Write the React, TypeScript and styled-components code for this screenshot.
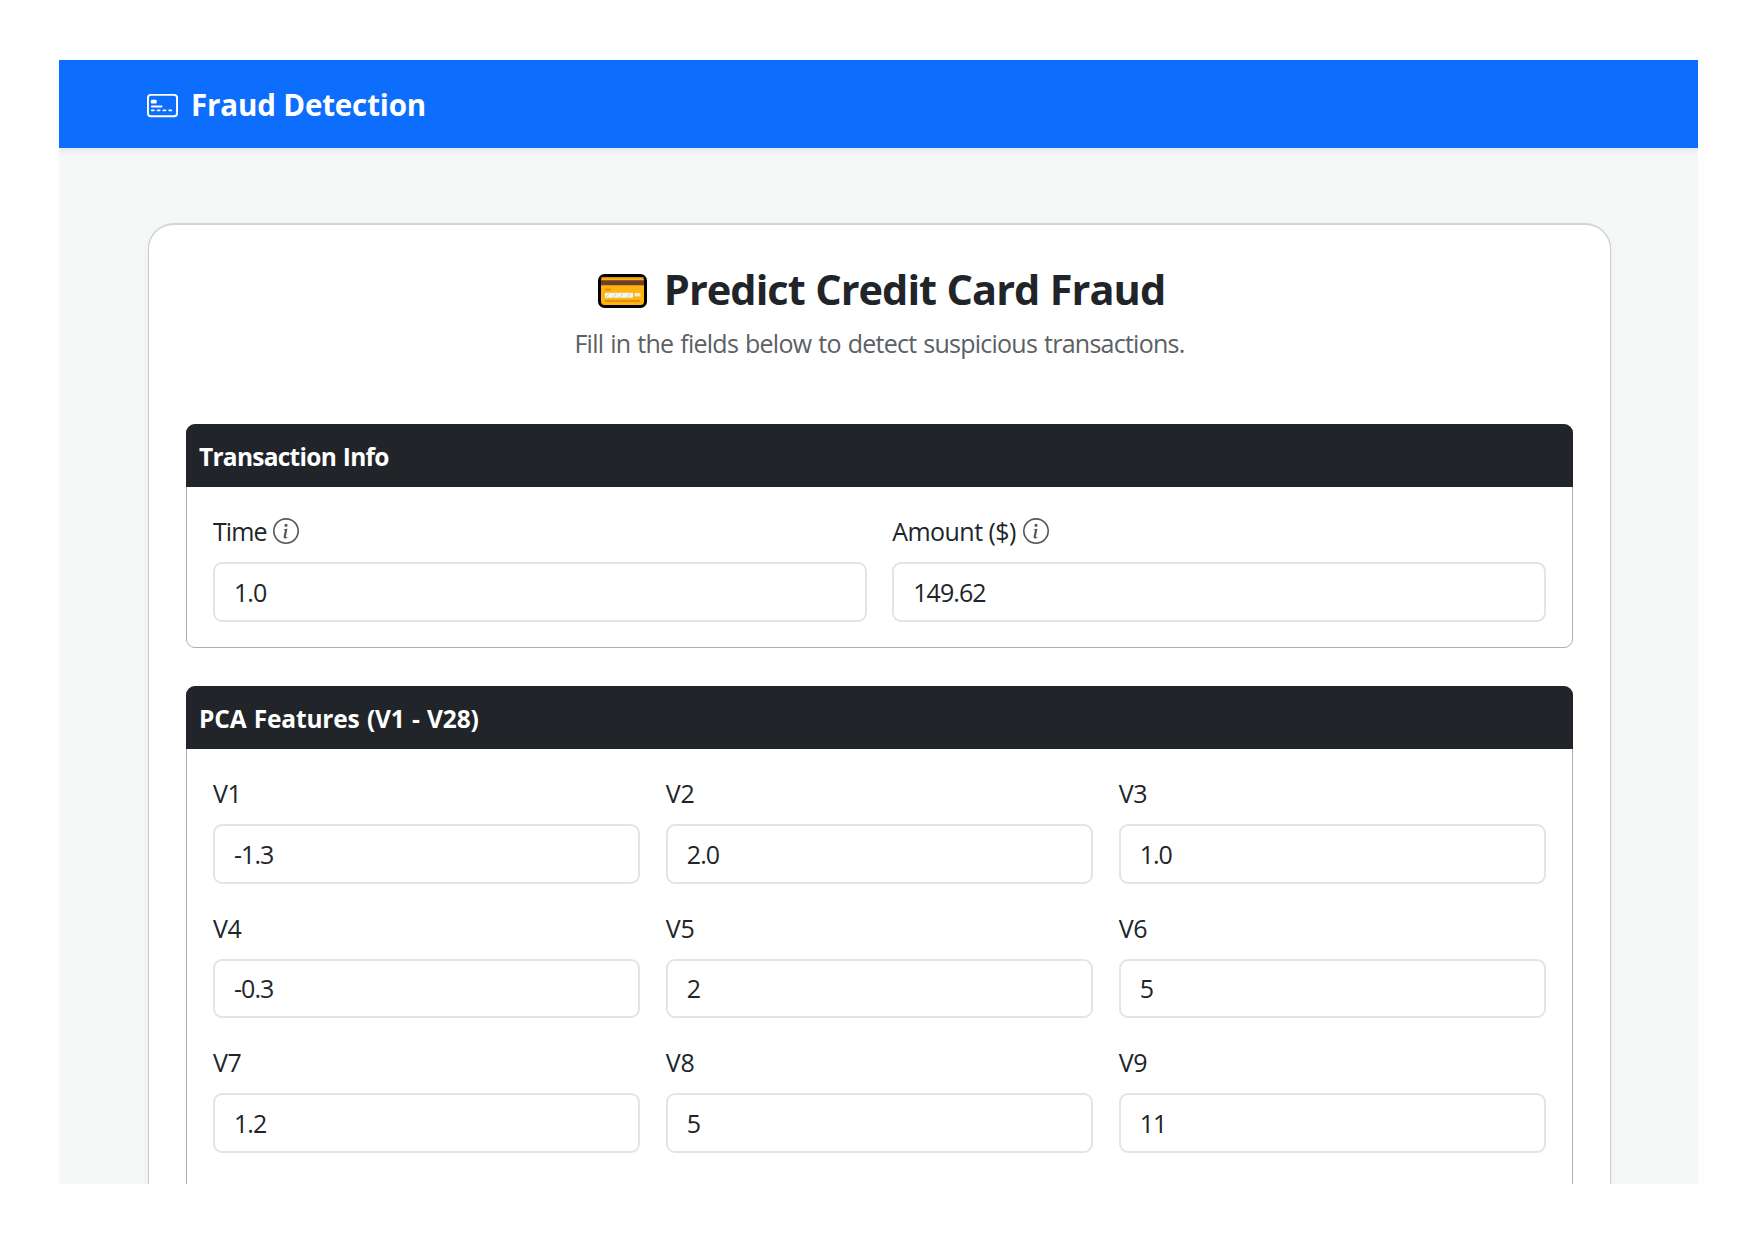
import React from "react";
import styled, { createGlobalStyle } from "styled-components";
import { BsCreditCard2Front, BsInfoCircle } from "react-icons/bs";

const GlobalStyle = createGlobalStyle`
  *, *::before, *::after { box-sizing: border-box; }
  body {
    margin: 0;
    background: #fefefe;
    color: #212529;
    font-family: "Segoe UI", "Open Sans", "Noto Sans", sans-serif;
    font-size: 25px;
    line-height: 36px;
  }
`;

const Page = styled.div`
  height: 1241px;
  padding: 60px 57px 57px 59px;
  overflow: hidden;
`;

const Window = styled.div`
  height: 1124px;
  overflow: hidden;
  background: #f6f8f8;
`;

const Navbar = styled.header`
  display: flex;
  align-items: center;
  height: 87.5px;
  padding: 3px 0 0 88px;
  color: #fff;
  background: #0d6efd;
  box-shadow: 0 3px 7px rgba(0, 40, 110, 0.09);
`;

const Brand = styled.div`
  display: flex;
  align-items: center;
  gap: 13px;
  font-size: 29.5px;
  font-weight: 700;
  letter-spacing: -0.15px;

  svg {
    width: 31px;
    height: 31px;
  }
`;

const Card = styled.main`
  width: 1463px;
  height: 1200px;
  margin: 75.5px 0 0 89px;
  padding: 43px 37px;
  border: 1px solid #c8ccd0;
  border-top: 2px solid #d2d5d7;
  border-radius: 26px;
  background: #fff;
  box-shadow: 0 3px 9px rgba(20, 90, 190, 0.07);
`;

const Title = styled.h1`
  display: flex;
  align-items: center;
  justify-content: center;
  gap: 17px;
  height: 42px;
  margin: 0;
  padding-left: 4px;
  font-size: 41.5px;
  line-height: 42px;
  font-weight: 700;
  letter-spacing: -0.96px;
  word-spacing: 0.6px;

  svg {
    margin-top: 3px;
  }
`;

const Subtitle = styled.p`
  margin: 15px 0 63px;
  height: 36px;
  text-align: center;
  letter-spacing: -0.75px;
  word-spacing: 1.2px;
  color: #5b6065;
`;

const Section = styled.section<{ $tall?: boolean }>`
  margin-bottom: 38px;
  min-height: ${(p) => (p.$tall ? "700px" : "0")};
  border: 1px solid #a9afb4;
  border-radius: 9px;
  background: #fff;
`;

const SectionHeader = styled.h2<{ $tracking: number }>`
  height: 62.5px;
  margin: -1px -1px 0;
  padding: 14.5px 13px 0;
  border-radius: 9px 9px 0 0;
  color: #fff;
  background: #212529;
  font-size: 24.5px;
  line-height: 36px;
  font-weight: 700;
  letter-spacing: ${(p) => p.$tracking}px;
  word-spacing: 1.2px;
`;

const Fields = styled.div<{ $columns: number }>`
  display: grid;
  grid-template-columns: repeat(${(p) => p.$columns}, 1fr);
  gap: 25px 25.5px;
  padding: 26.5px 26px 25.5px;
`;

const Field = styled.label`
  display: flex;
  flex-direction: column;
  gap: 13px;

  & + & {
    min-width: 0;
  }
`;

const LabelText = styled.span<{ $tracking: number }>`
  display: flex;
  align-items: center;
  gap: 7px;
  height: 36px;
  letter-spacing: ${(p) => p.$tracking}px;

  svg {
    width: 26px;
    height: 26px;
    color: #55595d;
  }
`;

const Input = styled.input`
  width: 100%;
  height: 59.5px;
  padding: 0 19px;
  border: 2px solid #e1e4e8;
  border-radius: 9px;
  outline: none;
  color: #212529;
  background: #fff;
  font: inherit;
  letter-spacing: -0.95px;
`;

const PcaFields = styled(Fields)`
  row-gap: 26px;
`;

const CardEmoji = () => (
  <svg width="49" height="34" viewBox="0 0 49 34" aria-hidden="true">
    <rect x="1.5" y="1.5" width="46" height="31" rx="5" fill="#ffb30f" stroke="#000" strokeWidth="3" />
    <path d="M3 3.7h43" stroke="#c98212" strokeWidth="1" />
    <path d="M3 8.8h43" stroke="#6b3f2a" strokeWidth="5" />
    <path d="M7 15.5h6M7 27h35" stroke="#d48806" strokeWidth="1.5" />
    <path d="M7 21.3h28" stroke="#f3f3ef" strokeWidth="5" />
    <path d="M8 23l3-3M15 23l3-3M22 23l3-3M29 23l3-3" stroke="#afd5e5" strokeWidth="1" />
    <path d="M36.5 20.7h6" stroke="#f5ead3" strokeWidth="3.5" />
  </svg>
);

interface FieldData {
  label: string;
  value: string;
  tracking: number;
  info?: boolean;
}

const transactionFields: FieldData[] = [
  { label: "Time", value: "1.0", tracking: -0.95, info: true },
  { label: "Amount ($)", value: "149.62", tracking: -0.55, info: true },
];

const pcaFields: FieldData[] = ["-1.3", "2.0", "1.0", "-0.3", "2", "5", "1.2", "5", "11"].map(
  (value, i) => ({ label: `V${i + 1}`, value, tracking: -0.3 })
);

interface FieldGroupProps {
  title: string;
  columns: number;
  fields: FieldData[];
  tracking: number;
  tall?: boolean;
}

function FieldGroup({ title, columns, fields, tracking, tall }: FieldGroupProps) {
  return (
    <Section $tall={tall}>
      <SectionHeader $tracking={tracking}>{title}</SectionHeader>
      <PcaFields $columns={columns}>
        {fields.map((f) => (
          <Field key={f.label}>
            <LabelText $tracking={f.tracking}>
              {f.label}
              {f.info && <BsInfoCircle />}
            </LabelText>
            <Input defaultValue={f.value} />
          </Field>
        ))}
      </PcaFields>
    </Section>
  );
}

export default function App() {
  return (
    <>
      <GlobalStyle />
      <Page>
        <Window>
          <Navbar>
            <Brand>
              <BsCreditCard2Front />
              <span>Fraud Detection</span>
            </Brand>
          </Navbar>
          <Card>
            <Title>
              <CardEmoji />
              <span>Predict Credit Card Fraud</span>
            </Title>
            <Subtitle>Fill in the fields below to detect suspicious transactions.</Subtitle>
            <FieldGroup title="Transaction Info" columns={2} fields={transactionFields} tracking={-0.74} />
            <FieldGroup title="PCA Features (V1 - V28)" columns={3} fields={pcaFields} tracking={-0.18} tall />
          </Card>
        </Window>
      </Page>
    </>
  );
}
